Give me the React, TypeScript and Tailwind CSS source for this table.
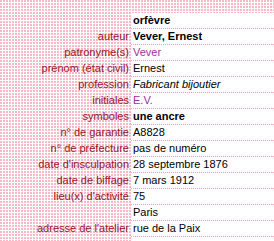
const rows: { label: string; value: string; tone?: 'bold' | 'link' | 'italic' }[] = [
  { label: '', value: 'orfèvre', tone: 'bold' },
  { label: 'auteur', value: 'Vever, Ernest', tone: 'bold' },
  { label: 'patronyme(s)', value: 'Vever', tone: 'link' },
  { label: 'prénom (état civil)', value: 'Ernest' },
  { label: 'profession', value: 'Fabricant bijoutier', tone: 'italic' },
  { label: 'initiales', value: 'E.V.', tone: 'link' },
  { label: 'symboles', value: 'une ancre', tone: 'bold' },
  { label: 'n° de garantie', value: 'A8828' },
  { label: 'n° de préfecture', value: 'pas de numéro' },
  { label: "date d'insculpation", value: '28 septembre 1876' },
  { label: 'date de biffage', value: '7 mars 1912' },
  { label: "lieu(x) d'activité", value: '75' },
  { label: '', value: 'Paris' },
  { label: "adresse de l'atelier", value: 'rue de la Paix' },
  { label: '', value: '' },
];

const toneClass = {
  bold: 'font-bold text-black',
  link: 'text-[#993399]',
  italic: 'italic text-black',
};

export default function App() {
  return (
    <div className="h-[241px] w-[274px] overflow-hidden bg-[conic-gradient(at_2px_2px,transparent_75%,#f7b9c5_0)] bg-[length:3px_3px] font-['Liberation_Sans',Arial,sans-serif] text-[11px] leading-[15px]">
      <div className="h-[13px]" />
      {rows.map((r, i) => (
        <div key={i} className="flex h-[16px]">
          <div className="w-[131px] shrink-0 pr-[2px] text-right text-[#961628] whitespace-nowrap">
            {r.label}
          </div>
          <div
            className={`flex-1 bg-white border-b border-dotted border-[#f0a0b0] pl-[2px] whitespace-nowrap ${
              r.tone ? toneClass[r.tone] : 'text-black'
            }`}
          >
            {r.value}
          </div>
        </div>
      ))}
    </div>
  );
}
